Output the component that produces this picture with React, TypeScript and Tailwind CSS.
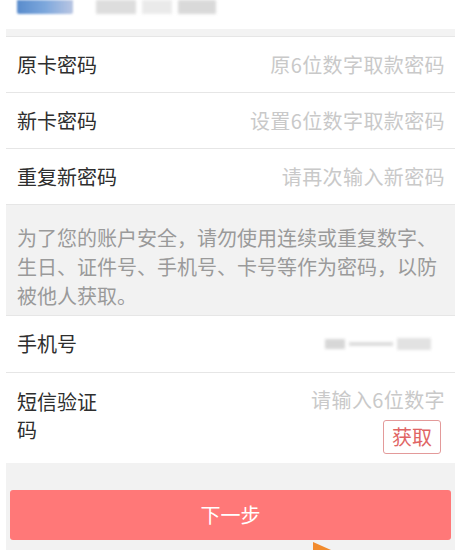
import React from 'react'

const font = { fontFamily: '"Noto Sans CJK SC", "Noto Sans", sans-serif' }

function Row({ label, hint }: { label: string; hint: string }) {
  return (
    <div className="flex h-[56px] items-center justify-between border-b border-[#e6e6e6] bg-white pl-[11px] pr-[10px]">
      <span className="text-[20px] text-[#2e2e2e]">{label}</span>
      <span className="text-[20px] tracking-[0.4px] text-[#c9c9c9]">{hint}</span>
    </div>
  )
}

export default function App() {
  return (
    <div className="h-[550px] w-[461px] overflow-hidden bg-white px-[6px]" style={font}>
      <div className="relative h-[550px] bg-[#f2f2f2]">
        {/* blurred card header */}
        <div className="flex h-[29px] items-start gap-[23px] bg-white pl-[11px]">
          <div className="h-[14px] w-[56px] rounded-b-[2px] bg-gradient-to-r from-[#2f6fc0] via-[#5d92d4] to-[#a8b8dc] opacity-80 blur-[1px]" />
          <div className="flex h-[14px] w-[120px] gap-[6px] opacity-70 blur-[1.5px]">
            <div className="h-full w-[40px] bg-[#cfcfcf]" />
            <div className="h-full w-[30px] bg-[#e2e2e2]" />
            <div className="h-full w-[38px] bg-[#c9c9c9]" />
          </div>
        </div>
        <div className="h-[8px] border-b border-[#e6e6e6] bg-[#f3f3f3]" />

        <Row label="原卡密码" hint="原6位数字取款密码" />
        <Row label="新卡密码" hint="设置6位数字取款密码" />
        <Row label="重复新密码" hint="请再次输入新密码" />

        <div className="border-b border-[#e6e6e6] bg-[#f2f2f2] px-[11px] pb-[5px] pt-[18px] text-[20px] leading-[29px] text-[#9a9a9a]">
          为了您的账户安全，请勿使用连续或重复数字、生日、证件号、手机号、卡号等作为密码，以防被他人获取。
        </div>

        <div className="flex h-[57px] items-center justify-between border-b border-[#e6e6e6] bg-white pl-[11px] pr-[10px]">
          <span className="text-[20px] text-[#2e2e2e]">手机号</span>
          <div className="mr-[2px] flex h-[14px] w-[118px] items-center gap-[4px] opacity-60 blur-[1.5px]">
            <div className="h-[10px] w-[20px] bg-[#bdbdbd]" />
            <div className="h-[4px] w-[44px] bg-[#c4c4c4]" />
            <div className="h-[12px] w-[34px] bg-[#d0d0d0]" />
          </div>
        </div>

        <div className="flex h-[90px] justify-between bg-white pl-[11px] pr-[10px] pt-[15px]">
          <span className="w-[90px] text-[20px] leading-[28px] text-[#2e2e2e]">短信验证码</span>
          <div className="-mt-[2px] flex flex-col items-end">
            <span className="text-[20px] leading-[28px] tracking-[0.4px] text-[#c9c9c9]">请输入6位数字</span>
            <button className="mr-[4px] mt-[6px] h-[34px] w-[58px] rounded-[3px] border border-[#e39a9a] text-[20px] leading-none text-[#e06464]">
              获取
            </button>
          </div>
        </div>

        <div className="px-[4px] pt-[27px]">
          <button className="flex h-[50px] w-full items-center justify-center rounded-[3px] bg-[#ff7878] text-[20px] text-white">
            下一步
          </button>
        </div>

        <svg className="absolute left-[303px] top-[540px]" width="24" height="12" viewBox="0 0 24 12">
          <path d="M4 2 L22 10 L4 12 Z" fill="#f28b2e" />
        </svg>
      </div>
    </div>
  )
}
